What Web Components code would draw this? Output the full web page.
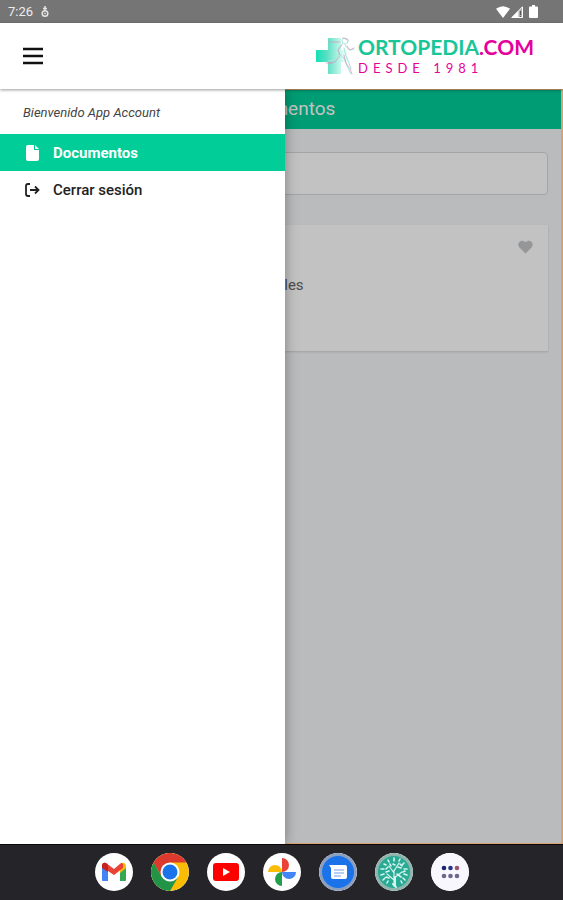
<!DOCTYPE html>
<html lang="es">
<head>
<meta charset="utf-8">
<meta name="viewport" content="width=device-width, initial-scale=1">
<title>Ortopedia.com</title>
<style>
  body {
    margin: 0;
    font-family: Roboto, "Liberation Sans", sans-serif;
    color: #222;
  }
</style>
</head>
<body>
<ortopedia-app></ortopedia-app>

<script>
class StatusBar extends HTMLElement {
  constructor() {
    super();
    this.attachShadow({ mode: 'open' });
  }

  connectedCallback() {
    this.shadowRoot.innerHTML = `
    <style>
      :host {
        display: flex;
        align-items: center;
        height: 23px;
        padding: 0 25px 0 8px;
        background: #757575;
        color: #eee;
        font-size: 13px;
        gap: 8px;
      }
      .signals { display: flex; align-items: center; margin-left: auto; gap: 1px; }
      .battery { margin-left: 5px; }
    </style>
    <time>7:26</time>
    <svg width="8" height="12" viewBox="0 0 8 12" fill="none" stroke="#e4e4e4">
      <path d="M4 0v5M2 2.500h4" stroke-width="1.500"/><circle cx="4" cy="7.500" r="2.800" stroke-width="1.500"/><circle cx="4" cy="7.500" r=".6"/>
    </svg>
    <div class="signals">
      <svg width="14" height="12" viewBox="0 0 14 12"><path d="M0 2.800Q7-2.400 14 2.800L7 12z" fill="#fff"/></svg>
      <svg width="12" height="12" viewBox="0 0 12 12"><path d="M11.500.8v10.700H.8z" fill="#aaa" stroke="#fff"/><path d="M7.500 5v7H.5z" fill="#fff"/><path d="M9.500 5v4M9.500 10v1" stroke="#555"/></svg>
      <svg class="battery" width="9" height="13" viewBox="0 0 9 13"><path d="M3 0h3v1.500h2q1 0 1 1V12q0 1-1 1H1q-1 0-1-1V2.500q0-1 1-1h2z" fill="#fff"/></svg>
    </div>
    `;
  }
}

class BrandLogo extends HTMLElement {
  constructor() {
    super();
    this.attachShadow({ mode: 'open' });
  }

  connectedCallback() {
    this.shadowRoot.innerHTML = `
    <style>
      :host { display: block; }
      a { display: flex; align-items: center; gap: 3px; text-decoration: none; }
      .words { display: flex; flex-direction: column; font-family: Lato, sans-serif; color: #e6009c; }
      .name { font-size: 21px; line-height: 24px; font-weight: 700; }
      .name b { color: #19c697; font-weight: inherit; }
      .since { font-size: 13px; line-height: 18px; letter-spacing: 5px; }
    </style>
    <a href="#" aria-label="Ortopedia.com">
      <svg width="39" height="38" viewBox="0 0 39 38" fill="none" stroke-linecap="round" stroke-linejoin="round">
        <defs>
          <linearGradient id="fade">
            <stop offset="0" stop-color="#13dfb6"/>
            <stop offset=".35" stop-color="#5fdfc4"/>
            <stop offset=".8" stop-color="#d5fbf2"/>
            <stop offset="1" stop-color="#fff"/>
          </linearGradient>
        </defs>
        <path d="M12 1h13v12h8v12h-8v12H12V25H0V13h12z" fill="url(#fade)"/>
        <g stroke="#a5e6d8">
          <circle cx="29" cy="4" r="3"/>
          <path d="M26 7q-5 4-3 10l5 4 3 8 4 8M29 8l4 5 5-1M28 11l2 8 3 7 2 6M23 17l-4 6-7 1"/>
        </g>
        <g stroke="#dc8fbe" stroke-width=".7">
          <path d="M13 5h11M27 1l5 2M26 8l-4 5 2 5M31 9l3 4 4-2M28 18l2 8 4 6 2 5M24 19l-5 6-7 1M10 26h6"/>
        </g>
      </svg>
      <span class="words">
        <span class="name"><b>ORTOPEDIA</b>.COM</span>
        <span class="since">DESDE 1981</span>
      </span>
    </a>
    `;
  }
}

class AppHeader extends HTMLElement {
  constructor() {
    super();
    this.attachShadow({ mode: 'open' });
  }

  connectedCallback() {
    this.shadowRoot.innerHTML = `
    <style>
      :host {
        display: flex;
        align-items: center;
        justify-content: space-between;
        height: 66px;
        padding: 0 29px 0 23px;
        background: #fff;
        box-shadow: 0 1px 3px rgba(0, 0, 0, .4);
        position: relative;
        z-index: 3;
      }
      button { display: flex; padding: 0; border: 0; background: none; cursor: pointer; }
    </style>
    <button type="button" aria-label="Menú">
      <svg width="20" height="18" viewBox="0 0 20 18" stroke="#111" stroke-width="2.500"><path d="M0 2h20M0 9h20M0 16h20"/></svg>
    </button>
    <slot></slot>
    `;
    this.shadowRoot.querySelector('button').addEventListener('click', () => {
      this.dispatchEvent(new CustomEvent('toggle-menu', { bubbles: true }));
    });
  }
}

class MenuItem extends HTMLElement {
  constructor() {
    super();
    this.attachShadow({ mode: 'open' });
  }

  connectedCallback() {
    this.shadowRoot.innerHTML = `
    <style>
      :host { display: block; color: #222; }
      :host([active]) { background: #00cd98; color: #fff; }
      a {
        display: flex;
        align-items: center;
        gap: 12px;
        height: 37px;
        padding: 0 24px;
        color: inherit;
        font-size: 15px;
        font-weight: 500;
        text-decoration: none;
      }
      :host([active]) a { font-weight: 700; }
      ::slotted(svg) { flex: none; }
    </style>
    <a href="#"><slot name="icon"></slot><slot></slot></a>
    `;
  }
}

class SideMenu extends HTMLElement {
  constructor() {
    super();
    this.attachShadow({ mode: 'open' });
  }

  connectedCallback() {
    this.shadowRoot.innerHTML = `
    <style>
      :host {
        display: block;
        position: absolute;
        inset: 0 auto 0 0;
        width: 285px;
        max-width: 80%;
        background: #fff;
        box-shadow: 0 0 12px rgba(0, 0, 0, .35);
        z-index: 2;
      }
      p {
        margin: 0;
        padding: 14px 23px 11px;
        color: #444;
        font-size: 13px;
        line-height: 20px;
        font-style: italic;
      }
    </style>
    <p><slot name="greeting"></slot></p>
    <nav><slot></slot></nav>
    `;
  }
}

class DocumentCard extends HTMLElement {
  constructor() {
    super();
    this.attachShadow({ mode: 'open' });
  }

  connectedCallback() {
    this.shadowRoot.innerHTML = `
    <style>
      :host {
        display: flex;
        align-items: flex-start;
        justify-content: space-between;
        min-height: 96px;
        padding: 15px;
        background: #fff;
        box-shadow: 0 1px 2px rgba(0, 0, 0, .15);
      }
      p { margin: 35px 0 0 120px; font-size: 15px; line-height: 20px; color: #666; }
      button { display: flex; padding: 0; border: 0; background: none; cursor: pointer; }
    </style>
    <p><slot></slot></p>
    <button type="button" aria-label="Favorito">
      <svg width="15" height="14" viewBox="0 0 15 14"><path d="M7.500 13.500L1.200 7.300C-2 3 3.500-2 7.500 2.300 11.500-2 17 3 13.800 7.300z" fill="#c4c6c7"/></svg>
    </button>
    `;
  }
}

class DocumentsPage extends HTMLElement {
  constructor() {
    super();
    this.attachShadow({ mode: 'open' });
  }

  connectedCallback() {
    this.shadowRoot.innerHTML = `
    <style>
      :host { display: block; flex: 1; background: #f4f6f7; }
      h1 {
        margin: 0;
        background: #00cd98;
        color: #fff;
        font-size: 19px;
        line-height: 40px;
        font-weight: 400;
        text-align: center;
      }
      .content { display: flex; flex-direction: column; gap: 30px; padding: 23px 15px; }
      input {
        box-sizing: border-box;
        width: 100%;
        height: 43px;
        padding: 0 12px;
        border: 1px solid #d6d9da;
        border-radius: 4px;
        background: #fff;
        font: inherit;
      }
    </style>
    <h1>Documentos</h1>
    <div class="content">
      <input type="search" aria-label="Buscar">
      <document-card>Documentos generales</document-card>
    </div>
    `;
  }
}

class AppDock extends HTMLElement {
  constructor() {
    super();
    this.attachShadow({ mode: 'open' });
  }

  connectedCallback() {
    this.shadowRoot.innerHTML = `
    <style>
      :host {
        display: flex;
        align-items: center;
        justify-content: center;
        gap: 18px;
        height: 56px;
        background: #242429;
        box-shadow: inset 0 1px #09090b;
      }
      button { display: flex; padding: 0; border: 0; border-radius: 50%; background: #fff; overflow: hidden; cursor: pointer; }
      svg { width: 38px; height: 38px; }
    </style>
    <button type="button" aria-label="Gmail">
      <svg viewBox="0 0 38 38">
        <path d="M7 12l6 4v12H8q-1 0-1-1z" fill="#4285f4"/>
        <path d="M31 12l-6 4v12h5q1 0 1-1z" fill="#34a853"/>
        <path d="M25 12v8l6-5v-2q-1-4-4-3z" fill="#fbbc04"/>
        <path d="M7 13q0-4 4-3l8 6 7-6q3 0 2 5l-9 7-12-8z" fill="#ea4335"/>
        <path d="M7 12q1-3 4-2l2 2v7l-6-4z" fill="#c5221f"/>
      </svg>
    </button>
    <button type="button" aria-label="Chrome">
      <svg viewBox="0 0 38 38">
        <circle cx="19" cy="19" r="19" fill="#fbbc04"/>
        <path d="M2.500 9.500A19 19 0 0 1 35.500 9.500H19L10.800 23.700z" fill="#dc3a2e"/>
        <path d="M2.500 9.500A19 19 0 0 0 19 38L27.200 23.700H10.800z" fill="#229447"/>
        <circle cx="19" cy="19" r="9.500" fill="#fff"/><circle cx="19" cy="19" r="7.500" fill="#1a73e8"/>
      </svg>
    </button>
    <button type="button" aria-label="YouTube">
      <svg viewBox="0 0 38 38"><rect x="6" y="10" width="26" height="18" rx="3" fill="#f00"/><path d="M16 15v8l7-4z" fill="#fff"/></svg>
    </button>
    <button type="button" aria-label="Fotos">
      <svg viewBox="0 0 38 38">
        <path d="M19 5a7 7 0 0 1 0 14z" fill="#ea4335"/>
        <path d="M33 19a7 7 0 0 1-14 0z" fill="#4285f4"/>
        <path d="M19 33a7 7 0 0 1 0-14z" fill="#229f4d"/>
        <path d="M5 19a7 7 0 0 1 14 0z" fill="#fbbc04"/>
      </svg>
    </button>
    <button type="button" aria-label="Mensajes">
      <svg viewBox="0 0 38 38">
        <circle cx="19" cy="19" r="19" fill="#8a9fc0"/><circle cx="19" cy="19" r="16" fill="#1a73e8"/>
        <path d="M10 12h16q2 0 2 2v10q0 2-2 2H14q-2 0-2-2v-9z" fill="#fff"/>
        <path d="M15 17h10M15 20h10M15 23h7" stroke="#6f9fe8" stroke-width="1.200"/>
      </svg>
    </button>
    <button type="button" aria-label="Árbol">
      <svg viewBox="0 0 38 38" fill="none" stroke="#d9f4ee" stroke-linecap="round">
        <circle cx="19" cy="19" r="19" fill="#8fb5ac" stroke="none"/><circle cx="19" cy="19" r="16" fill="#27ab94" stroke="none"/>
        <path d="M19 33V17M19 27l-7-6M19 25l8-6M19 20l-5-7M19 18l5-8" stroke-width="1.200"/>
        <path d="M18 31l3 3M20 24v9" stroke-width="2"/>
        <path d="M19 5v3M13 7l1 2M25 6l-1 2M9 11l2 1M29 10l-2 2M6 16h3M32 16h-3M6 22l3-1M32 22l-3-1M8 27l2-2M30 27l-2-2M16 13l-1-2M23 14l3 1M18 11l2 1M14 18l-3 1M22 21l4 3M13 14l-2 2M25 11l2 2M11 24l3 1M28 19l2-1M12 30l1-2M27 30l-1-2" stroke-width="1.600"/>
      </svg>
    </button>
    <button type="button" aria-label="Aplicaciones">
      <svg viewBox="0 0 38 38">
        <circle cx="19" cy="19" r="19" fill="#f7f7fd"/>
        <g fill="#6d678b">
          <circle cx="13" cy="15" r="2.300" fill="#1c2470"/><circle cx="19.500" cy="15" r="2.300" fill="#28318c"/><circle cx="26" cy="15" r="2.300" fill="#96546f"/>
          <circle cx="13" cy="23" r="2.300"/><circle cx="19.500" cy="23" r="2.300"/><circle cx="26" cy="23" r="2.300"/>
        </g>
      </svg>
    </button>
    `;
  }
}

class OrtopediaApp extends HTMLElement {
  constructor() {
    super();
    this.attachShadow({ mode: 'open' });
  }

  connectedCallback() {
    this.shadowRoot.innerHTML = `
    <style>
      :host { display: flex; flex-direction: column; min-height: 100vh; }
      main { display: flex; flex: 1; position: relative; overflow: hidden; }
      .backdrop {
        position: absolute;
        inset: 0;
        border: solid #d9a273;
        border-width: 1px 2px 1px 0;
        background: rgba(0, 0, 0, .24);
        z-index: 1;
      }
      [hidden] { display: none; }
    </style>
    <status-bar></status-bar>
    <app-header><brand-logo></brand-logo></app-header>
    <main>
      <documents-page></documents-page>
      <div class="backdrop"></div>
      <side-menu>
        <span slot="greeting">Bienvenido App Account</span>
        <menu-item active>
          <svg slot="icon" width="17" height="16" viewBox="0 0 17 16"><path d="M4 0h6v5h5v9q0 2-2 2H4q-2 0-2-2V2q0-2 2-2zM11 0l4 4h-4z" fill="#fff"/></svg>
          Documentos
        </menu-item>
        <menu-item>
          <svg slot="icon" width="17" height="16" viewBox="0 0 17 16" fill="none" stroke="#222" stroke-width="1.800"><path d="M6 2H4Q2 2 2 4v8q0 2 2 2h2M6 8h9M11 4.500L14.500 8 11 11.500"/></svg>
          Cerrar sesión
        </menu-item>
      </side-menu>
    </main>
    <app-dock></app-dock>
    `;

    const menu = this.shadowRoot.querySelector('side-menu');
    const backdrop = this.shadowRoot.querySelector('.backdrop');
    this.shadowRoot.addEventListener('toggle-menu', () => {
      menu.style.display = menu.style.display ? '' : 'none';
      backdrop.hidden = !backdrop.hidden;
    });
  }
}

customElements.define('status-bar', StatusBar);
customElements.define('brand-logo', BrandLogo);
customElements.define('app-header', AppHeader);
customElements.define('menu-item', MenuItem);
customElements.define('side-menu', SideMenu);
customElements.define('document-card', DocumentCard);
customElements.define('documents-page', DocumentsPage);
customElements.define('app-dock', AppDock);
customElements.define('ortopedia-app', OrtopediaApp);
</script>
</body>
</html>
